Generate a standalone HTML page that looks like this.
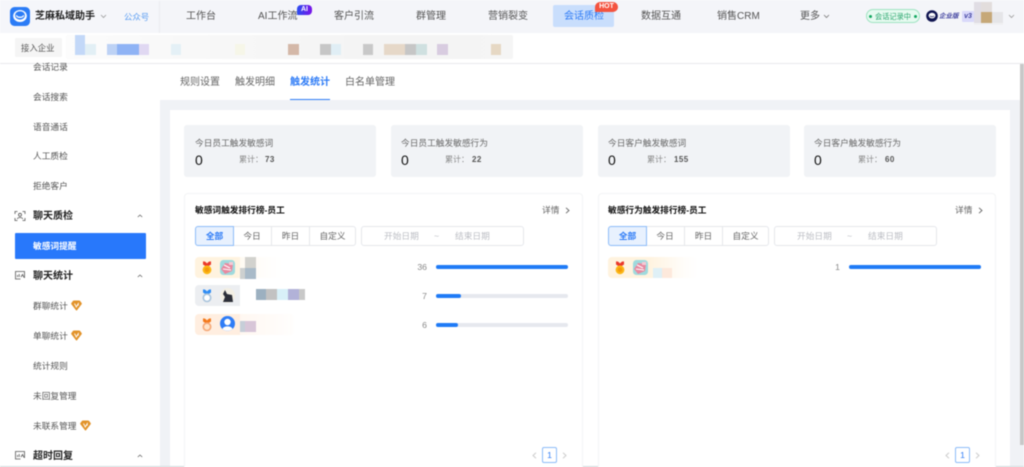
<!DOCTYPE html>
<html lang="zh-CN"><head><meta charset="utf-8"><title>会话质检</title>
<style>
*{box-sizing:border-box}
html,body{margin:0;padding:0;width:1024px;height:467px;overflow:hidden;background:#fff}
body{font-family:"Liberation Sans","Noto Sans CJK SC",sans-serif;color:#555;position:relative}
#r{position:absolute;left:0;top:0;width:1024px;height:467px;overflow:hidden;filter:blur(.4px)}
#r div{position:absolute}
.t{white-space:nowrap;line-height:14px;height:14px}
.n{font-size:10px;color:#555}
.s{font-size:8.7px;color:#555;left:33px}
.h{font-size:10px;color:#222;font-weight:700;left:33px}
.tab{font-size:10px;color:#666}
.card{background:#f1f3f6;border-radius:3px;top:125px;height:52px;width:192px}
.ct{font-size:8.7px;color:#666}
.z{font-size:14px;color:#111;line-height:16px;height:16px}
.le{font-size:8px;color:#888}
.lv{font-size:8px;color:#555;font-weight:700;letter-spacing:.4px}
.panel{background:#fff;border:1px solid #f3f4f6;border-bottom:0;border-radius:4px 4px 0 0;top:193px;height:274px;width:399px}
.pt{font-size:8.7px;color:#111;font-weight:700}
.f{border:1px solid #e5e7eb;background:#fff;top:226px;height:20px;font-size:8.7px;color:#666;text-align:center;line-height:18px}
.on{background:#e8f1fe;border:1px solid #8dbcf8;color:#2f7cf6;font-weight:700;border-radius:3px 0 0 3px;z-index:1}
.dt{top:226px;height:20px;border:1px solid #e5e7eb;border-radius:3px;width:163px}
.ph{font-size:8.7px;color:#bcbec4}
.bar{background:#e6e8ee;border-radius:2px;height:4px;width:132px}
.fill{background:#1f7bf6;border-radius:2px;height:4px;left:0;top:0}
.num{font-size:8.7px;color:#888;text-align:right;width:30px}
.row{height:21px;border-radius:4px;width:90px}
.pg{top:447px;height:16px;width:15px;border:1px solid #8dbcf8;border-radius:2px;font-size:8.7px;color:#2f7cf6;text-align:center;line-height:14px}
svg{position:absolute;overflow:visible}
</style></head><body><div id="r">

<!-- top left -->
<div style="left:0;top:0;width:160px;height:33px;background:#f5f6fa"></div>
<!-- nav -->
<div style="left:160px;top:0;width:864px;height:33px;background:#f4f5f9;box-shadow:0 1px 2px rgba(0,0,0,.12)"></div>
<svg style="left:10px;top:7px" width="20" height="19" viewBox="0 0 20 19"><rect width="20" height="19" rx="4.5" fill="#2b7cf6"/><ellipse cx="10" cy="9" rx="6.8" ry="6" fill="#fff"/><ellipse cx="10" cy="8.4" rx="5" ry="4.2" fill="#2b7cf6"/><path d="M6.5 8.8c1.2 2 5.800 2 7 0" stroke="#fff" stroke-width="1.3" fill="none" stroke-linecap="round"/></svg>
<div class="t" style="left:35px;top:10px;font-size:10px;font-weight:700;color:#222">芝麻私域助手</div>
<svg style="left:100px;top:14px" width="7" height="5" viewBox="0 0 7 5"><path d="M1 1l2.500 2.500L6 1" stroke="#999" fill="none" stroke-width=".8"/></svg>
<div class="t" style="left:124px;top:10px;font-size:8.4px;color:#5a9df2">公众号</div>

<div class="t n" style="left:186px;top:10px">工作台</div>
<div class="t n" style="left:258px;top:10px">AI工作流</div>
<div style="left:297px;top:5px;width:15px;height:10px;border-radius:4px 4px 4px 1px;background:linear-gradient(90deg,#2a4df0,#7a12e8);color:#fff;font-size:7px;font-weight:700;text-align:center;line-height:10px">AI</div>
<div class="t n" style="left:334px;top:10px">客户引流</div>
<div class="t n" style="left:416px;top:10px">群管理</div>
<div class="t n" style="left:488px;top:10px">营销裂变</div>
<div style="left:553px;top:5px;width:61px;height:22px;background:#c9defc;border-radius:2px"></div>
<div class="t n" style="left:564px;top:10px;color:#2f7cf6">会话质检</div>
<div style="left:595px;top:2px;width:23px;height:10px;border-radius:5px 5px 5px 1px;background:#f4533f;color:#fff;font-size:7px;font-weight:700;text-align:center;line-height:10px">HOT</div>
<div class="t n" style="left:641px;top:10px">数据互通</div>
<div class="t n" style="left:717px;top:10px">销售CRM</div>
<div class="t n" style="left:800px;top:10px">更多</div>
<svg style="left:823px;top:14px" width="7" height="5" viewBox="0 0 7 5"><path d="M1 1l2.500 2.500L6 1" stroke="#777" fill="none" stroke-width=".8"/></svg>

<div style="left:866px;top:9px;width:54px;height:14px;border:1px solid #9fe3c2;background:#e6faf0;border-radius:7px"></div>
<div style="left:869px;top:15px;width:3px;height:3px;border-radius:50%;background:#12a860"></div>
<div style="left:914px;top:15px;width:3px;height:3px;border-radius:50%;background:#12a860"></div>
<div class="t" style="left:875px;top:10px;font-size:7.2px;color:#27a56c">会话记录中</div>
<svg style="left:926px;top:10px" width="12" height="12" viewBox="0 0 12 12"><circle cx="6" cy="6" r="5.800" fill="#0f1450"/><ellipse cx="6" cy="5.600" rx="3.400" ry="2.800" fill="#fff"/><path d="M4 6c.8 1 3.200 1 4 0" stroke="#0f1450" fill="none" stroke-width=".8"/></svg>
<div class="t" style="left:939px;top:10px;font-size:6.5px;font-style:italic;font-weight:700;color:#3d3f9e">企业版</div>
<div style="left:962px;top:11px;width:12px;height:11px;background:#d9d9fa;border-radius:1px;font-size:7px;font-style:italic;font-weight:700;color:#3d3f9e;text-align:center;line-height:11px">v3</div>
<div style="left:974px;top:2px;width:7px;height:21px;background:#e0dde4"></div>
<div style="left:981px;top:2px;width:11px;height:10px;background:#e2dddc"></div>
<div style="left:981px;top:12px;width:11px;height:11px;background:#c6a878"></div>
<div style="left:992px;top:12px;width:11px;height:11px;background:#e5e5e8"></div>
<div style="left:974px;top:23px;width:29px;height:2px;background:#f0f0f2"></div>
<svg style="left:1008px;top:14px" width="7" height="5" viewBox="0 0 7 5"><path d="M1 1l2.500 2.500L6 1" stroke="#999" fill="none" stroke-width=".8"/></svg>

<!-- second bar -->
<div style="left:0;top:33px;width:1024px;height:31px;background:#fff;border-bottom:1px solid #e9eaed"></div>
<div style="left:15px;top:38px;width:47px;height:19px;background:#f5f5f5;border-radius:1px"></div>
<div class="t" style="left:21px;top:41px;font-size:8.4px;color:#555">接入企业</div>
<div style="left:66px;top:35px;width:447px;height:24px;background:linear-gradient(90deg,#fcfcfc,#f8f8f8 30%,#f4f4f4 70%,#f5f5f5);border-radius:2px"></div>
<div style="left:75px;top:35px;width:10px;height:20px;background:#c3d8f8"></div>
<div style="left:85px;top:44px;width:11px;height:11px;background:#e2eff5"></div>
<div style="left:107px;top:44px;width:10px;height:11px;background:#bdd2f5"></div>
<div style="left:117px;top:44px;width:22px;height:11px;background:#8fb3f5"></div>
<div style="left:139px;top:44px;width:10px;height:11px;background:#e0d8f2"></div>
<div style="left:171px;top:44px;width:10px;height:11px;background:#e4f0f6"></div>
<div style="left:235px;top:44px;width:10px;height:11px;background:#f6f6e8"></div>
<div style="left:288px;top:44px;width:11px;height:11px;background:#d4b8a8"></div>
<div style="left:320px;top:44px;width:11px;height:11px;background:#c6c6c6"></div>
<div style="left:331px;top:44px;width:10px;height:11px;background:#e0eef5"></div>
<div style="left:363px;top:44px;width:10px;height:11px;background:#c8c8c8"></div>
<div style="left:384px;top:44px;width:21px;height:11px;background:#e6d8c8"></div>
<div style="left:405px;top:44px;width:11px;height:11px;background:#c6c6c6"></div>
<div style="left:416px;top:44px;width:11px;height:11px;background:#cfe0e0"></div>
<div style="left:437px;top:44px;width:11px;height:11px;background:#d8cce0"></div>
<div style="left:491px;top:44px;width:10px;height:11px;background:#e6d8c4"></div>

<!-- sidebar -->
<div class="t s" style="top:60px">会话记录</div>
<div class="t s" style="top:90px">会话搜索</div>
<div class="t s" style="top:120px">语音通话</div>
<div class="t s" style="top:149px">人工质检</div>
<div class="t s" style="top:179px">拒绝客户</div>
<svg style="left:15px;top:211px" width="10" height="10" viewBox="0 0 10 10" fill="none" stroke="#555" stroke-width=".8"><path d="M0 3V.5h2.500M7.500.5H10V3M0 7v2.500h2.500M7.500 9.500H10V7"/><circle cx="5" cy="3.800" r="1.500"/><path d="M2.300 8c.5-2 4.900-2 5.400 0"/></svg>
<div class="t h" style="top:210px">聊天质检</div>
<svg style="left:137px;top:214px" width="6" height="4" viewBox="0 0 6 4"><path d="M.8 3L3 1l2.200 2" stroke="#666" fill="none" stroke-width=".8"/></svg>
<div style="left:15px;top:233px;width:131px;height:26px;background:#2878fb;border-radius:1px"></div>
<div class="t s" style="top:239px;color:#fff;font-weight:700">敏感词提醒</div>
<svg style="left:15px;top:271px" width="10" height="10" viewBox="0 0 10 10" fill="none" stroke="#555" stroke-width=".8"><path d="M9.500 7V.5H.5v7.500h5"/><path d="M2.500 6V4M4.200 6V3"/><path d="M6 6l1.500-2.500L9 6.500"/></svg>
<div class="t h" style="top:270px">聊天统计</div>
<svg style="left:137px;top:274px" width="6" height="4" viewBox="0 0 6 4"><path d="M.8 3L3 1l2.200 2" stroke="#666" fill="none" stroke-width=".8"/></svg>
<div class="t s" style="top:299px">群聊统计</div>
<svg style="left:71px;top:300px" width="11" height="11" viewBox="0 0 11 11"><path d="M3 .5h5q.7 0 1.200.6l1.500 2q.4.6-.1 1.200L6 10.300q-.5.5-1 0L.4 4.300q-.5-.6-.1-1.200l1.500-2Q2.300.5 3 .5z" fill="#e2932a"/><path d="M3.500 3.500l1.800 3.500 2.400-4.200M6.300 5.500l1.500-.8" stroke="#fff" fill="none" stroke-width=".9"/></svg>
<div class="t s" style="top:329px">单聊统计</div>
<svg style="left:71px;top:330px" width="11" height="11" viewBox="0 0 11 11"><path d="M3 .5h5q.7 0 1.200.6l1.500 2q.4.6-.1 1.200L6 10.300q-.5.5-1 0L.4 4.300q-.5-.6-.1-1.200l1.500-2Q2.300.5 3 .5z" fill="#e2932a"/><path d="M3.500 3.500l1.800 3.500 2.400-4.200M6.300 5.500l1.500-.8" stroke="#fff" fill="none" stroke-width=".9"/></svg>
<div class="t s" style="top:359px">统计规则</div>
<div class="t s" style="top:389px">未回复管理</div>
<div class="t s" style="top:419px">未联系管理</div>
<svg style="left:80px;top:420px" width="11" height="11" viewBox="0 0 11 11"><path d="M3 .5h5q.7 0 1.200.6l1.500 2q.4.6-.1 1.200L6 10.300q-.5.5-1 0L.4 4.300q-.5-.6-.1-1.200l1.500-2Q2.300.5 3 .5z" fill="#e2932a"/><path d="M3.500 3.500l1.800 3.500 2.400-4.200M6.300 5.500l1.500-.8" stroke="#fff" fill="none" stroke-width=".9"/></svg>
<svg style="left:15px;top:451px" width="10" height="10" viewBox="0 0 10 10" fill="none" stroke="#555" stroke-width=".8"><path d="M9.500 7V.5H.5v7.500h5"/><path d="M2.500 6V4M4.200 6V3"/><path d="M6 6l1.500-2.500L9 6.500"/></svg>
<div class="t h" style="top:450px">超时回复</div>
<svg style="left:137px;top:454px" width="6" height="4" viewBox="0 0 6 4"><path d="M.8 3L3 1l2.200 2" stroke="#666" fill="none" stroke-width=".8"/></svg>

<!-- content -->
<div style="left:160px;top:100px;width:864px;height:367px;background:#f0f2f6"></div>
<div style="left:170px;top:110px;width:840px;height:357px;background:#fff"></div>
<div style="left:1020px;top:64px;width:4px;height:381px;background:#c8c8c8"></div>
<div style="left:0;top:466px;width:1024px;height:1px;background:#cfd8da"></div>

<div class="t tab" style="left:180px;top:76px">规则设置</div>
<div class="t tab" style="left:235px;top:76px">触发明细</div>
<div class="t tab" style="left:290px;top:76px;color:#2f7cf6;font-weight:700">触发统计</div>
<div class="t tab" style="left:345px;top:76px">白名单管理</div>
<div style="left:290px;top:99px;width:40px;height:1px;background:#2f7cf6"></div>

<!-- cards -->
<div class="card" style="left:184px"></div>
<div class="card" style="left:391px"></div>
<div class="card" style="left:598px"></div>
<div class="card" style="left:804px;width:192px"></div>
<div class="t ct" style="left:195px;top:136px">今日员工触发敏感词</div>
<div class="t z" style="left:195px;top:152px">0</div>
<div class="t le" style="left:239px;top:153px">累计：</div><div class="t lv" style="left:265px;top:153px">73</div>
<div class="t ct" style="left:401px;top:136px">今日员工触发敏感行为</div>
<div class="t z" style="left:401px;top:152px">0</div>
<div class="t le" style="left:445px;top:153px">累计：</div><div class="t lv" style="left:472px;top:153px">22</div>
<div class="t ct" style="left:608px;top:136px">今日客户触发敏感词</div>
<div class="t z" style="left:608px;top:152px">0</div>
<div class="t le" style="left:647px;top:153px">累计：</div><div class="t lv" style="left:674px;top:153px">155</div>
<div class="t ct" style="left:814px;top:136px">今日客户触发敏感行为</div>
<div class="t z" style="left:814px;top:152px">0</div>
<div class="t le" style="left:858px;top:153px">累计：</div><div class="t lv" style="left:885px;top:153px">60</div>

<!-- left panel -->
<div class="panel" style="left:184px"></div>
<div class="t pt" style="left:195px;top:203px">敏感词触发排行榜-员工</div>
<div class="t" style="left:542px;top:203px;font-size:8.7px;color:#666">详情</div>
<svg style="left:565px;top:207px" width="5" height="7" viewBox="0 0 5 7"><path d="M1 .8L4 3.500 1 6.200" stroke="#666" fill="none" stroke-width=".9"/></svg>
<div class="f on" style="left:195px;width:39px">全部</div>
<div class="f" style="left:233px;width:39px;border-left:0">今日</div>
<div class="f" style="left:271px;width:39px">昨日</div>
<div class="f" style="left:309px;width:47px;border-radius:0 3px 3px 0">自定义</div>
<div class="dt" style="left:361px"></div>
<div class="t ph" style="left:384px;top:229px">开始日期</div>
<div class="t ph" style="left:434px;top:229px">~</div>
<div class="t ph" style="left:455px;top:229px">结束日期</div>

<div class="row" style="left:195px;top:257px;background:linear-gradient(90deg,#fff3df,#fff3df 45%,#fffdfa 85%,#fff)"></div>
<div class="row" style="left:195px;top:285px;background:linear-gradient(90deg,#eceef1,#eceef1 50%,#fff 50%)"></div>
<div class="row" style="left:195px;top:314px;width:100px;background:linear-gradient(90deg,#ffeee0,#ffeee0 45%,#fffaf6 90%,#fff)"></div>

<!-- medals -->
<svg style="left:201px;top:260px" width="12" height="15" viewBox="0 0 12 15"><path d="M2 1.500Q4 1 6 3.500 8 1 10 1.500V4.500L7 6.500H5L2 4.500z" fill="#ea3a2b"/><circle cx="6" cy="9.800" r="4.400" fill="#fbb615"/><circle cx="6" cy="9.800" r="2.300" fill="#f49a0a"/></svg>
<svg style="left:201px;top:288px" width="12" height="15" viewBox="0 0 12 15"><path d="M2 1.500Q4 1 6 3.500 8 1 10 1.500V4.500L7 6.500H5L2 4.500z" fill="#2f8df5"/><circle cx="6" cy="9.800" r="3.700" fill="#fff" stroke="#a9c4dc" stroke-width="1.600"/></svg>
<svg style="left:201px;top:317px" width="12" height="15" viewBox="0 0 12 15"><path d="M2 1.500Q4 1 6 3.500 8 1 10 1.500V4.500L7 6.500H5L2 4.500z" fill="#f47a1c"/><circle cx="6" cy="9.800" r="3.700" fill="#ffe3c8" stroke="#f4a878" stroke-width="1.600"/></svg>
<!-- avatars -->
<svg style="left:220px;top:260px" width="15" height="15" viewBox="0 0 15 15"><rect width="15" height="15" rx="3.500" fill="#9fdadd"/><path d="M1 9l4-6 8 1-1 7-7 3z" fill="#e88aa0"/><path d="M4 5l6 3M3 9l8 1" stroke="#fff" stroke-width="1"/><rect x="9" y="2" width="4" height="3" fill="#f6c9d4"/></svg>
<svg style="left:220px;top:288px" width="15" height="15" viewBox="0 0 15 15"><circle cx="7.500" cy="7.500" r="7.500" fill="#f3efe4"/><path d="M5 2l2 4 5 1 1 7H3l2-5-2-3z" fill="#2c2f38"/></svg>
<svg style="left:220px;top:316px" width="15" height="15" viewBox="0 0 15 15"><circle cx="7.500" cy="7.500" r="7.500" fill="#2f7df6"/><circle cx="7.500" cy="6" r="3.200" fill="#fff"/><path d="M2.500 13c1-3.500 9-3.500 10 0a7.500 7.500 0 0 1-10 0z" fill="#fff"/></svg>

<!-- mosaics left -->
<div style="left:240px;top:254px;width:48px;height:27px;background:#fff;opacity:.55"></div>
<div style="left:240px;top:282px;width:65px;height:27px;background:#fff"></div>
<div style="left:240px;top:312px;width:50px;height:27px;background:#fff;opacity:.55"></div>
<div style="left:245px;top:257px;width:11px;height:11px;background:#d2d2ce"></div>
<div style="left:240px;top:268px;width:5px;height:11px;background:#cdd0d0"></div>
<div style="left:245px;top:268px;width:11px;height:11px;background:#a9bac8"></div>
<div style="left:256px;top:289px;width:10px;height:11px;background:#9cb0c0"></div>
<div style="left:266px;top:289px;width:11px;height:11px;background:#c2c2c2"></div>
<div style="left:277px;top:289px;width:11px;height:11px;background:#d8f0f8"></div>
<div style="left:288px;top:289px;width:11px;height:11px;background:#b2b2d8"></div>
<div style="left:299px;top:289px;width:6px;height:11px;background:#c8c8c8"></div>
<div style="left:240px;top:321px;width:5px;height:11px;background:#c6ced8"></div>
<div style="left:245px;top:321px;width:11px;height:11px;background:#d8c6d8"></div>

<div class="t num" style="left:397px;top:260px">36</div>
<div class="bar" style="left:436px;top:265px"><div class="fill" style="width:132px"></div></div>
<div class="t num" style="left:397px;top:289px">7</div>
<div class="bar" style="left:436px;top:294px"><div class="fill" style="width:25px"></div></div>
<div class="t num" style="left:397px;top:318px">6</div>
<div class="bar" style="left:436px;top:323px"><div class="fill" style="width:22px"></div></div>

<svg style="left:532px;top:452px" width="5" height="7" viewBox="0 0 5 7"><path d="M4 .8L1 3.500 4 6.200" stroke="#ccc" fill="none"/></svg>
<div class="pg" style="left:542px">1</div>
<svg style="left:562px;top:452px" width="5" height="7" viewBox="0 0 5 7"><path d="M1 .8L4 3.500 1 6.200" stroke="#ccc" fill="none"/></svg>

<!-- right panel -->
<div class="panel" style="left:598px;width:398px"></div>
<div class="t pt" style="left:608px;top:203px">敏感行为触发排行榜-员工</div>
<div class="t" style="left:955px;top:203px;font-size:8.7px;color:#666">详情</div>
<svg style="left:978px;top:207px" width="5" height="7" viewBox="0 0 5 7"><path d="M1 .8L4 3.500 1 6.200" stroke="#666" fill="none" stroke-width=".9"/></svg>
<div class="f on" style="left:608px;width:39px">全部</div>
<div class="f" style="left:646px;width:39px;border-left:0">今日</div>
<div class="f" style="left:684px;width:39px">昨日</div>
<div class="f" style="left:722px;width:47px;border-radius:0 3px 3px 0">自定义</div>
<div class="dt" style="left:774px"></div>
<div class="t ph" style="left:797px;top:229px">开始日期</div>
<div class="t ph" style="left:847px;top:229px">~</div>
<div class="t ph" style="left:868px;top:229px">结束日期</div>
<div class="row" style="left:608px;top:257px;background:linear-gradient(90deg,#fff3df,#fff3df 45%,#fffdfa 85%,#fff)"></div>
<svg style="left:614px;top:260px" width="12" height="15" viewBox="0 0 12 15"><path d="M2 1.500Q4 1 6 3.500 8 1 10 1.500V4.500L7 6.500H5L2 4.500z" fill="#ea3a2b"/><circle cx="6" cy="9.800" r="4.400" fill="#fbb615"/><circle cx="6" cy="9.800" r="2.300" fill="#f49a0a"/></svg>
<svg style="left:633px;top:260px" width="15" height="15" viewBox="0 0 15 15"><rect width="15" height="15" rx="3.500" fill="#9fdadd"/><path d="M1 9l4-6 8 1-1 7-7 3z" fill="#e88aa0"/><path d="M4 5l6 3M3 9l8 1" stroke="#fff" stroke-width="1"/><rect x="9" y="2" width="4" height="3" fill="#f6c9d4"/></svg>
<div style="left:653px;top:268px;width:9px;height:10px;background:#dff0f6"></div>
<div style="left:662px;top:268px;width:10px;height:10px;background:#fde9dc"></div>
<div class="t num" style="left:810px;top:260px">1</div>
<div class="bar" style="left:849px;top:265px"><div class="fill" style="width:132px"></div></div>
<svg style="left:945px;top:452px" width="5" height="7" viewBox="0 0 5 7"><path d="M4 .8L1 3.500 4 6.200" stroke="#ccc" fill="none"/></svg>
<div class="pg" style="left:955px">1</div>
<svg style="left:975px;top:452px" width="5" height="7" viewBox="0 0 5 7"><path d="M1 .8L4 3.500 1 6.200" stroke="#ccc" fill="none"/></svg>

</div></body></html>
